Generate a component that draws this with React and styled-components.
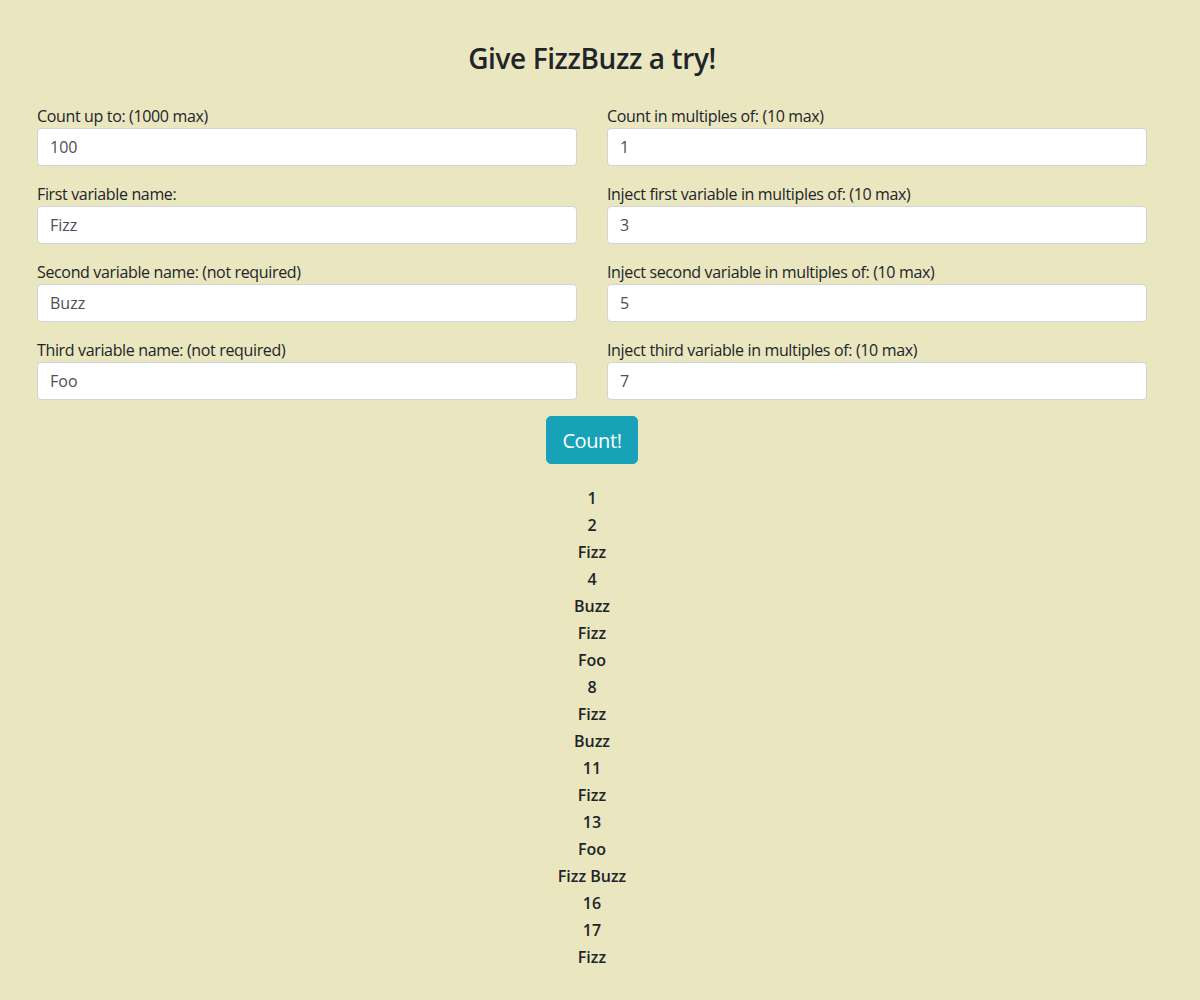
import React, { useState } from 'react';
import styled, { createGlobalStyle } from 'styled-components';

const GlobalStyle = createGlobalStyle`
  html, body {
    margin: 0;
    overflow: hidden;
    background: #eae6bf;
  }
  body {
    font-family: "Segoe UI", "Open Sans", "Noto Sans", sans-serif;
    color: #212529;
    font-size: 16px;
  }
`;

const Page = styled.div`
  width: 1110px;
  margin-left: 37px;
  padding-top: 41px;
`;

const Title = styled.h3`
  margin: 0 0 29px;
  font-size: 28px;
  line-height: 34px;
  font-weight: 600;
  letter-spacing: -0.4px;
  text-align: center;
`;

const Form = styled.form`
  display: grid;
  grid-template-columns: 1fr 1fr;
  column-gap: 30px;
  row-gap: 16px;
`;

const Field = styled.div`
  display: flex;
  flex-direction: column;
`;

const Label = styled.label`
  font-size: 16px;
  line-height: 24px;
  font-weight: 400;
  letter-spacing: -0.35px;
`;

const Input = styled.input`
  box-sizing: border-box;
  height: 38px;
  padding: 6px 12px;
  font-family: inherit;
  font-size: 16px;
  color: #495057;
  background: #fff;
  border: 1px solid #ced4da;
  border-radius: 4px;
  outline: none;
`;

const Actions = styled.div`
  display: flex;
  justify-content: center;
  margin-top: 16px;
`;

const Button = styled.button`
  height: 48px;
  padding: 0 15px;
  font-family: inherit;
  font-size: 20px;
  letter-spacing: -0.4px;
  color: #fff;
  background: #17a2b8;
  border: 1px solid #17a2b8;
  border-radius: 5px;
  cursor: pointer;
`;

const Results = styled.div`
  margin-top: 21px;
  display: flex;
  flex-direction: column;
  align-items: center;
`;

const Item = styled.div`
  font-size: 16px;
  line-height: 27px;
  font-weight: 600;
`;

const fields = [
  ['Count up to: (1000 max)', '100'],
  ['Count in multiples of: (10 max)', '1'],
  ['First variable name:', 'Fizz'],
  ['Inject first variable in multiples of: (10 max)', '3'],
  ['Second variable name: (not required)', 'Buzz'],
  ['Inject second variable in multiples of: (10 max)', '5'],
  ['Third variable name: (not required)', 'Foo'],
  ['Inject third variable in multiples of: (10 max)', '7'],
];

const VISIBLE = 18;

function fizzbuzz(v) {
  const max = Number(v[0]);
  const step = Number(v[1]);
  const vars = [[v[2], Number(v[3])], [v[4], Number(v[5])], [v[6], Number(v[7])]];
  const out = [];
  for (let i = step; i <= max; i += step) {
    const words = vars.filter(([name, m]) => name && m && i % m === 0).map(([name]) => name);
    out.push(words.length ? words.join(' ') : String(i));
  }
  return out;
}

export default function App() {
  const [values, setValues] = useState(fields.map((f) => f[1]));
  const [items, setItems] = useState(() => fizzbuzz(fields.map((f) => f[1])));

  const onChange = (i) => (e) => {
    const next = values.slice();
    next[i] = e.target.value;
    setValues(next);
  };

  return (
    <Page>
      <GlobalStyle />
      <Title>Give FizzBuzz a try!</Title>
      <Form onSubmit={(e) => e.preventDefault()}>
        {fields.map(([label], i) => (
          <Field key={label}>
            <Label htmlFor={`f${i}`}>{label}</Label>
            <Input id={`f${i}`} value={values[i]} onChange={onChange(i)} />
          </Field>
        ))}
      </Form>
      <Actions>
        <Button type="button" onClick={() => setItems(fizzbuzz(values))}>Count!</Button>
      </Actions>
      <Results>
        {items.slice(0, VISIBLE).map((t, i) => (
          <Item key={i}>{t}</Item>
        ))}
      </Results>
    </Page>
  );
}
